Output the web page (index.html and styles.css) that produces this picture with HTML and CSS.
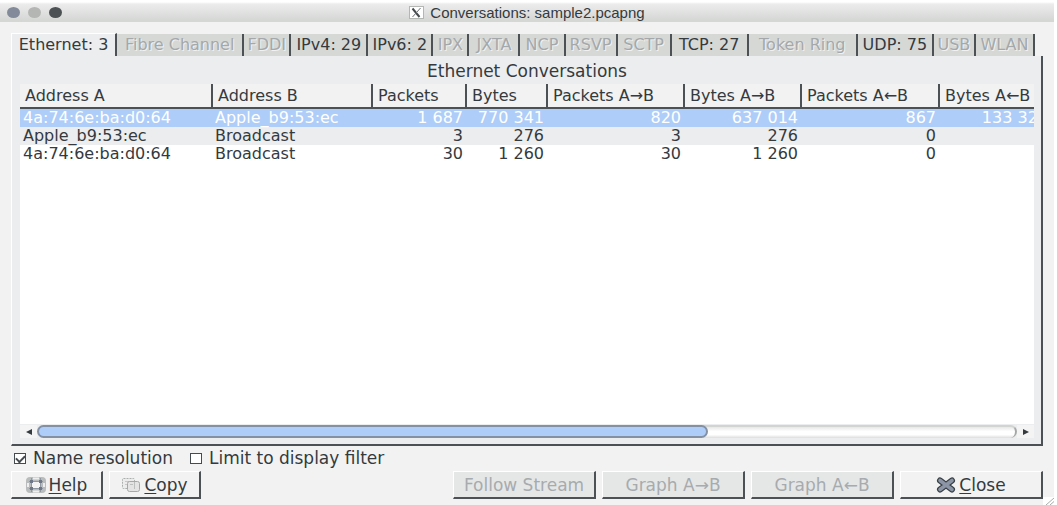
FILE: index.html
```html
<!DOCTYPE html>
<html lang="en">
<head>
<meta charset="utf-8">
<title>Conversations: sample2.pcapng</title>
<link rel="stylesheet" href="styles.css">
</head>
<body>
<div class="window">
  <header class="titlebar">
    <div class="lights">
      <button class="light light-close" aria-label="Close window"></button>
      <button class="light light-min" aria-label="Minimize"></button>
      <button class="light light-zoom" aria-label="Zoom"></button>
    </div>
    <h1 class="title">
      <svg class="title-icon" viewBox="0 0 15 13" aria-hidden="true"><rect x=".5" y=".5" width="14" height="12" fill="#fff" stroke="#b4b6b4"/><path d="M3.5 2.5L10.5 11" stroke="#454a4d" stroke-width="2"/><path d="M11.5 2L3.5 11" stroke="#6a6f72" stroke-width="1"/></svg>
      Conversations: sample2.pcapng
    </h1>
  </header>

  <main class="content">
    <div class="tabs" role="tablist">
      <button class="tab tab-active" role="tab" aria-selected="true">Ethernet: 3</button>
      <button class="tab" role="tab" disabled>Fibre Channel</button>
      <button class="tab" role="tab" disabled>FDDI</button>
      <button class="tab" role="tab">IPv4: 29</button>
      <button class="tab" role="tab">IPv6: 2</button>
      <button class="tab" role="tab" disabled>IPX</button>
      <button class="tab" role="tab" disabled>JXTA</button>
      <button class="tab" role="tab" disabled>NCP</button>
      <button class="tab" role="tab" disabled>RSVP</button>
      <button class="tab" role="tab" disabled>SCTP</button>
      <button class="tab" role="tab">TCP: 27</button>
      <button class="tab" role="tab" disabled>Token Ring</button>
      <button class="tab" role="tab">UDP: 75</button>
      <button class="tab" role="tab" disabled>USB</button>
      <button class="tab" role="tab" disabled>WLAN</button>
    </div>

    <section class="panel" role="tabpanel">
      <h2 class="panel-title">Ethernet Conversations</h2>
      <div class="list">
        <table class="table">
          <colgroup><col class="c-addr-a"><col class="c-addr-b"><col class="c-packets"><col class="c-bytes"><col class="c-packets-ab"><col class="c-bytes-ab"><col class="c-packets-ba"><col class="c-bytes-ba"></colgroup>
          <thead>
            <tr><th>Address A</th><th>Address B</th><th>Packets</th><th>Bytes</th><th>Packets A→B</th><th>Bytes A→B</th><th>Packets A←B</th><th>Bytes A←B</th></tr>
          </thead>
          <tbody>
            <tr class="selected"><td>4a:74:6e:ba:d0:64</td><td>Apple_b9:53:ec</td><td class="num">1 687</td><td class="num">770 341</td><td class="num">820</td><td class="num">637 014</td><td class="num">867</td><td class="num">133 327</td></tr>
            <tr class="shaded"><td>Apple_b9:53:ec</td><td>Broadcast</td><td class="num">3</td><td class="num">276</td><td class="num">3</td><td class="num">276</td><td class="num">0</td><td></td></tr>
            <tr><td>4a:74:6e:ba:d0:64</td><td>Broadcast</td><td class="num">30</td><td class="num">1 260</td><td class="num">30</td><td class="num">1 260</td><td class="num">0</td><td></td></tr>
          </tbody>
        </table>
      </div>
      <div class="scrollbar">
        <button class="step" aria-label="Scroll left"><svg viewBox="0 0 6 6" aria-hidden="true"><path d="M6 0v6L0 3z"/></svg></button>
        <div class="track"><div class="thumb"></div></div>
        <button class="step" aria-label="Scroll right"><svg viewBox="0 0 6 6" aria-hidden="true"><path d="M0 0v6l6-3z"/></svg></button>
      </div>
    </section>

    <div class="options">
      <label class="option"><input class="check" type="checkbox" checked>Name resolution</label>
      <label class="option"><input class="check" type="checkbox">Limit to display filter</label>
    </div>

    <footer class="actions">
      <button class="btn btn-small">
        <svg class="icon" viewBox="0 0 20 16" aria-hidden="true"><rect x="0" y="0" width="20" height="16" rx="4" fill="#b9bcbc"/><rect x="6" y="4" width="8" height="8" rx="2" fill="#f3f3f3"/><path d="M7 1.500h6M7 14.500h6M2 6v4M18 6v4" stroke="#eee" stroke-width="2"/><path d="M5.500 1v14M14.500 1v14M3 4.500h14M3 11.500h14" stroke="#8f97a3" stroke-width="1"/><path d="M4 3h3v3H4zM13 3h3v3h-3zM4 10h3v3H4zM13 10h3v3h-3z" fill="#6c7686"/></svg>
        <span><u>H</u>elp</span>
      </button>
      <button class="btn btn-small">
        <svg class="icon" viewBox="0 0 20 16" aria-hidden="true"><rect x="1.500" y="1.500" width="12" height="10" rx="1" fill="#ececec" stroke="#aaaead" stroke-dasharray="2 1"/><path d="M4 4.500h6M4 7.500h3" stroke="#c6c8c7"/><rect x="6.500" y="4.500" width="12" height="10" rx="2" fill="#e3e4e3" stroke="#a5aaa9"/><path d="M13.500 5v7M9 7.500h3" stroke="#bcbfbe"/></svg>
        <span><u>C</u>opy</span>
      </button>
      <span class="spacer"></span>
      <button class="btn" disabled>Follow Stream</button>
      <button class="btn" disabled>Graph A→B</button>
      <button class="btn" disabled>Graph A←B</button>
      <button class="btn">
        <svg class="icon" viewBox="0 0 20 16" aria-hidden="true"><path d="M4 3.500L16 12.500M16 3.500L4 12.500" stroke="#394047" stroke-width="6" stroke-linecap="round"/><path d="M4 3.500L16 12.500M16 3.500L4 12.500" stroke="#8b95a5" stroke-width="3.600" stroke-linecap="round"/></svg>
        <span><u>C</u>lose</span>
      </button>
    </footer>
  </main>
  <svg class="grip" viewBox="0 0 11 8" aria-hidden="true"><path d="M0 0h11v8H0z" fill="#fff"/><path d="M3 8l8-7M7 8l4-3.500" stroke="#a8aaaa"/></svg>
</div>
</body>
</html>
```
FILE: styles.css
```css
* { box-sizing: border-box; }

body {
  margin: 0;
  background: #fff;
  color: #343a3e;
  font: 16px/18px "DejaVu Sans", sans-serif;
}

button {
  margin: 0;
  padding: 0;
  border: 0;
  background: none;
  color: inherit;
  font: inherit;
}

.window {
  position: relative;
  display: flex;
  flex-direction: column;
  min-height: 100vh;
  margin-right: 3px;
  background: #f2f2f2;
}

.titlebar {
  display: grid;
  grid-template-columns: 1fr auto 1fr;
  align-items: center;
  height: 22px;
  padding: 3px 0 0 7px;
  background: linear-gradient(#fff 0, #fff 2px, #ececec 4px, #d5d7d5 20px);
}

.lights { display: flex; gap: 8px; }

.light {
  width: 13px;
  height: 11px;
  border-radius: 50%;
}

.light-close { background: #838b9b; }
.light-min { background: #b4b6b4; }
.light-zoom { background: #4c5154; }

.title {
  display: flex;
  align-items: center;
  gap: 6px;
  margin: 0;
  padding-right: 7px;
  font: 15px/16px "Liberation Sans", Arial, sans-serif;
}

.title-icon { width: 15px; height: 13px; }

.content {
  flex: 1;
  display: flex;
  flex-direction: column;
  padding: 11px 11px 6px;
}

.tabs {
  display: grid;
  grid-template-columns: 106fr 127fr 47fr 77fr 65fr 36fr 51fr 45fr 52fr 54fr 77fr 109fr 76fr 42fr 59fr;
  align-items: end;
  margin-right: 8px;
}

.tab {
  min-width: 0;
  height: 22px;
  border-right: 2px solid #4b5154;
  background: #d6d8d6;
  white-space: nowrap;
}

.tab:disabled {
  color: #a4a8ab;
  text-shadow: 1px 1px #f0f1f0;
}

.tab-active {
  height: 23px;
  border-top: 1px solid #fff;
  border-left: 1px solid #fff;
  background: #ecedee;
}

.panel {
  flex: 1;
  display: flex;
  flex-direction: column;
  padding: 6px 7px 5px 8px;
  border-left: 1px solid #fff;
  border-right: 2px solid #4b5154;
  border-bottom: 2px solid #4b5154;
  background: #ecedee;
}

.panel-title {
  margin: 0 0 4px;
  font-size: 17px;
  font-weight: normal;
  line-height: 18px;
  text-align: center;
}

.list {
  flex: 1;
  overflow-x: auto;
  scrollbar-width: none;
  background: #fff;
}

.table {
  width: 1031px;
  border-collapse: collapse;
  table-layout: fixed;
  white-space: nowrap;
}

.c-addr-a { width: 192px; }
.c-addr-b { width: 160px; }
.c-packets { width: 94px; }
.c-bytes { width: 81px; }
.c-packets-ab { width: 137px; }
.c-bytes-ab { width: 117px; }
.c-packets-ba { width: 138px; }
.c-bytes-ba { width: 112px; }

.table th {
  height: 24px;
  padding: 0 0 0 5px;
  border-right: 2px solid #4b5154;
  border-bottom: 2px solid #4b5154;
  background: #f2f2f2;
  font-weight: normal;
  text-align: left;
}

.table td {
  height: 18px;
  padding: 0 3px;
}

.table .num { text-align: right; }

.selected { background: #aecdf8; color: #fff; }
.shaded { background: #ecedee; }

.scrollbar {
  display: flex;
  align-items: center;
  height: 15px;
}

.step {
  display: flex;
  align-items: center;
  justify-content: center;
  width: 17px;
  height: 13px;
  background: #f4f4f4;
}

.step svg { width: 6px; height: 6px; fill: #343a3e; }

.track {
  flex: 1;
  height: 13px;
  border-top: 2px solid #d2d4d2;
  border-radius: 7px;
  border-right: 2px solid #a6a8a6;
  background: linear-gradient(#e6e7e6, #fff 40%, #fff 70%, #ddd);
}

.thumb {
  width: 671px;
  max-width: 70%;
  height: 13px;
  margin-top: -2px;
  border: 2px solid #8490a4;
  border-radius: 7px;
  background: #aecdf8;
}

.options {
  display: flex;
  gap: 17px;
  padding: 3px 3px 4px;
  font-size: 17px;
}

.option {
  display: flex;
  align-items: center;
  gap: 7px;
}

.check {
  appearance: none;
  display: grid;
  width: 12px;
  height: 11px;
  margin: 0;
  border: 1px solid #454b4e;
  background: #fff;
}

.check:checked::before {
  content: "";
  place-self: center;
  width: 7px;
  height: 4px;
  border: solid #454b4e;
  border-width: 0 0 2px 2px;
  transform: rotate(-45deg);
}

.actions { display: flex; gap: 6px; }

.btn {
  display: flex;
  align-items: center;
  justify-content: center;
  gap: 3px;
  width: 143px;
  height: 28px;
  border: solid #fff;
  border-width: 1px 2px 2px 1px;
  border-right-color: #4b5154;
  border-bottom-color: #4b5154;
  background: #f2f2f2;
  font-size: 17px;
}

.btn-small { width: 92px; }

.btn:disabled {
  background: #e5e7e7;
  color: #a7abae;
}

.btn u { text-underline-offset: 2px; text-decoration-thickness: 1px; }

.icon { width: 20px; height: 16px; fill: none; }

.spacer { flex: 1; }

.grip {
  position: absolute;
  right: 0;
  bottom: 0;
  width: 11px;
  height: 8px;
  fill: none;
}
```
